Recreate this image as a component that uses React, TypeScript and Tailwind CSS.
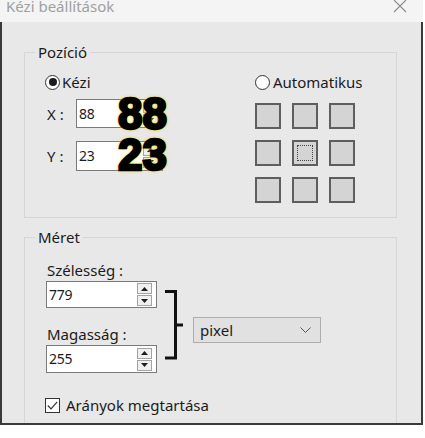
import React from "react";

function SpinBtn({ up }: { up?: boolean }) {
  return (
    <div className="w-[15px] h-[11px] bg-[#f0f0f0] border border-[#a3a3a3] flex items-center justify-center">
      <svg width="7" height="4" viewBox="0 0 7 4">
        <path d={up ? "M0 4 L3.5 0 L7 4Z" : "M0 0 L3.5 4 L7 0Z"} fill="#1e1e1e" />
      </svg>
    </div>
  );
}

function SpinBox({ value, className }: { value: string; className: string }) {
  return (
    <div className={`flex items-center justify-between bg-white border border-[#7a7a7a] pl-[2px] pr-[4px] ${className}`}>
      <span className="text-[14px] leading-none tracking-[-0.3px] text-[#1b1b1b]">{value}</span>
      <div className="flex flex-col gap-[1px]">
        <SpinBtn up />
        <SpinBtn />
      </div>
    </div>
  );
}

function Radio({ checked }: { checked?: boolean }) {
  return (
    <div className="w-[15px] h-[15px] rounded-full border border-[#333] bg-white flex items-center justify-center">
      {checked && <div className="w-[8px] h-[8px] rounded-full bg-[#1b1b1b]" />}
    </div>
  );
}

function Cell({ focus }: { focus?: boolean }) {
  return (
    <div className="w-[26px] h-[26px] border-2 border-[#5e5e5e] bg-[#d4d4d4] flex items-center justify-center">
      {focus && <div className="w-[16px] h-[16px] border border-dotted border-[#444]" />}
    </div>
  );
}

const bigText =
  "absolute left-[71px] font-['Liberation_Sans',Arial,sans-serif] font-bold text-[44px] leading-none text-black [-webkit-text-stroke:2.5px_black] [text-shadow:0_0_2px_#ffe600,0_0_2px_#ffe600,0_0_3px_#ffe600,0_0_4px_#e8c800]";

export default function App() {
  return (
    <div className="w-[425px] h-[438px] bg-white font-['Noto_Sans',sans-serif] text-[15px] leading-[20px] text-[#1b1b1b] overflow-hidden">
      <div className="w-[423px]">
        {/* title bar */}
        <div className="h-[22px] bg-[#f4f4f4] flex items-start justify-between pl-[6px] pr-[16px] overflow-hidden">
          <span className="text-[#a0a0a0] -mt-[4px]">Kézi beállítások</span>
          <svg width="14" height="14" viewBox="0 0 14 14" className="-mt-[1px]">
            <path d="M1 1 L13 13 M13 1 L1 13" stroke="#8a8a8a" strokeWidth="1.1" />
          </svg>
        </div>

        {/* body */}
        <div className="h-[403px] border-x-2 border-b-2 border-[#3a3a3a] bg-[#e8e8e8] pt-[20px] pl-[22px] overflow-hidden">
          {/* Pozíció */}
          <fieldset className="w-[373px] h-[176px] border border-[#d6d6d6]">
            <legend className="ml-[10px] px-[3px]">Pozíció</legend>
            <div className="flex">
              <div className="w-[230px] pl-[20px] pt-[10px]">
                <div className="h-[20px] flex items-center gap-[2px]">
                  <Radio checked />
                  <span>Kézi</span>
                </div>
                <div className="relative mt-[7px] flex items-center ml-[2px]">
                  <span className="w-[29px]">X :</span>
                  <SpinBox value="88" className="w-[87px] h-[29px]" />
                  <span className={`${bigText} top-[-7px]`}>88</span>
                </div>
                <div className="relative mt-[13px] flex items-center ml-[2px]">
                  <span className="w-[29px]">Y :</span>
                  <SpinBox value="23" className="w-[87px] h-[30px]" />
                  <span className={`${bigText} top-[-8px]`}>23</span>
                </div>
              </div>
              <div className="pt-[10px]">
                <div className="h-[20px] flex items-center gap-[3px]">
                  <Radio />
                  <span>Automatikus</span>
                </div>
                <div className="mt-[11px] grid grid-cols-[26px_26px_26px] gap-x-[11px] gap-y-[11px]">
                  <Cell />
                  <Cell />
                  <Cell />
                  <Cell />
                  <Cell focus />
                  <Cell />
                  <Cell />
                  <Cell />
                  <Cell />
                </div>
              </div>
            </div>
          </fieldset>

          {/* Méret */}
          <fieldset className="mt-[9px] w-[373px] h-[230px] border border-[#d6d6d6]">
            <legend className="ml-[10px] px-[3px]">Méret</legend>
            <div className="pl-[21px] pt-[13px] flex items-start">
              <div className="w-[111px]">
                <div className="pl-[1px]">Szélesség :</div>
                <SpinBox value="779" className="mt-[1px] w-[111px] h-[27px]" />
                <div className="pl-[1px] mt-[16px]">Magasság :</div>
                <SpinBox value="255" className="mt-[1px] w-[111px] h-[28px]" />
              </div>
              <svg width="26" height="76" viewBox="0 0 26 76" className="ml-[3px] mt-[27px]">
                <path d="M5 4.5 H15.5 V71 H5" fill="none" stroke="#111" strokeWidth="3" />
                <path d="M15.5 38 H23" fill="none" stroke="#111" strokeWidth="3" />
              </svg>
              <div className="ml-[7px] mt-[57px] w-[128px] h-[26px] bg-[#e1e1e1] border border-[#adadad] flex items-center justify-between pl-[6px] pr-[9px]">
                <span>pixel</span>
                <svg width="11" height="6" viewBox="0 0 11 6">
                  <path d="M0.5 0.5 L5.5 5.5 L10.5 0.5" fill="none" stroke="#555" strokeWidth="1" />
                </svg>
              </div>
            </div>
            <div className="pl-[20px] mt-[22px] h-[20px] flex items-center gap-[6px]">
              <div className="w-[15px] h-[15px] border border-[#333] bg-white flex items-center justify-center">
                <svg width="11" height="9" viewBox="0 0 11 9">
                  <path d="M0.8 4.5 L4 7.8 L10.2 0.8" fill="none" stroke="#333" strokeWidth="1.2" />
                </svg>
              </div>
              <span>Arányok megtartása</span>
            </div>
          </fieldset>
        </div>
      </div>
    </div>
  );
}
